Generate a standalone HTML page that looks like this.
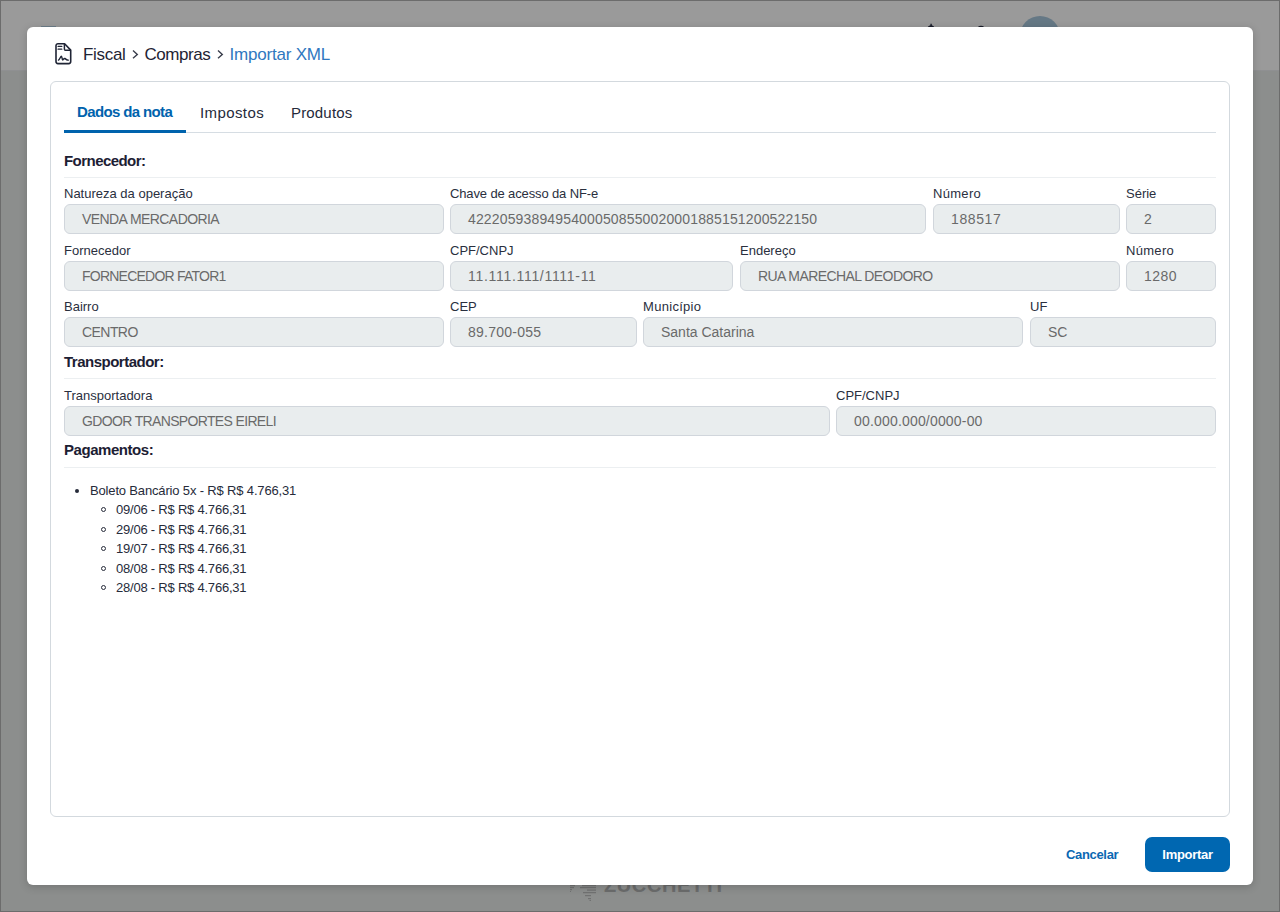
<!DOCTYPE html>
<html><head><meta charset="utf-8">
<style>
*{box-sizing:border-box;margin:0;padding:0}
html,body{width:1280px;height:912px;overflow:hidden;font-family:"Liberation Sans",sans-serif}
body{position:relative;background:#8c8e8d}
.abs{position:absolute}
#hdr{left:0;top:0;width:1280px;height:71px;background:#9a9a9a;border-bottom:1px solid #8f9092}
#frame{left:0;top:0;width:1280px;height:912px;border:1px solid #6c6c6c;pointer-events:none;z-index:50}
#modal{left:27px;top:27px;width:1226px;height:858px;background:#fff;border-radius:6px;box-shadow:0 2px 8px rgba(0,0,0,.18);z-index:10}
.crumb{top:45px;font-size:17px;color:#1f2435;white-space:nowrap;line-height:20px}
#card{left:50px;top:81px;width:1180px;height:736px;border:1px solid #d3d9de;border-radius:6px;z-index:11}
.tab{top:103px;font-size:15px;color:#252a3a;line-height:18px;white-space:nowrap}
.sec{font-size:15px;font-weight:bold;color:#1c2033;left:64px;line-height:18px;white-space:nowrap}
.sep{left:64px;width:1152px;height:1px;background:#eceff1}
.lbl{font-size:13px;color:#2a2f3e;line-height:15px;white-space:nowrap}
.inp{height:30px;background:#e9edee;border:1px solid #d1d6dc;border-radius:6px;font-size:14px;color:#6a6a6a;padding-left:17px;line-height:28px;white-space:nowrap;overflow:hidden}
.li{font-size:13px;color:#262b3a;line-height:15px;white-space:nowrap}
</style></head>
<body>
<div id="hdr" class="abs"></div>
<div class="abs" style="left:41px;top:26px;width:15px;height:1px;background:#6d7e8a"></div>
<div class="abs" style="left:1020px;top:15.6px;width:40px;height:40px;border-radius:50%;background:#657885"></div>
<svg class="abs" style="left:924px;top:22px" width="14" height="8" viewBox="0 0 14 8"><path d="M6.4 1.8h1.4v1.4c1.5.4 2.5 1.5 2.6 2.8l.8 1H2.8l.8-1c.1-1.3 1.1-2.4 2.8-2.8z" fill="#1a1d2b"/></svg>
<svg class="abs" style="left:975px;top:22px" width="12" height="8" viewBox="0 0 12 8"><path d="M3 7.5a3 3 0 0 1 6 0" fill="none" stroke="#1a1d2b" stroke-width="1.6"/></svg>
<!-- logo -->
<div class="abs" style="left:604px;top:874px;font-size:20px;line-height:23px;font-weight:bold;color:#6b6c6c;letter-spacing:0.6px;white-space:nowrap">ZUCCHETTI</div>
<svg class="abs" style="left:565px;top:880px" width="36" height="24" viewBox="0 0 36 24">
<g fill="#707171"><rect x="5" y="5" width="5" height="1.2"/><rect x="5" y="7" width="4" height="1.2"/><rect x="5" y="9" width="2" height="1.2"/><rect x="5" y="11" width="1" height="1"/>
<rect x="17" y="5" width="14" height="1.2"/><rect x="15" y="7" width="16" height="1.2"/><rect x="22" y="9.5" width="9" height="1.2"/><rect x="18" y="12" width="13" height="1.2"/><rect x="20" y="15" width="6" height="1.2"/><rect x="23" y="18" width="3" height="1.2"/><rect x="24.5" y="20" width="1.5" height="1"/></g>
</svg>

<div id="modal" class="abs"></div>
<div id="card" class="abs"></div>

<div style="position:absolute;left:0;top:0;z-index:20;width:1280px;height:912px">
<!-- breadcrumb icon -->
<svg class="abs" style="left:52px;top:40px" width="24" height="28" viewBox="0 0 24 28">
<path d="M12.6 3.7H6a2 2 0 0 0-2 2V21.6a2 2 0 0 0 2 2H16.7a2 2 0 0 0 2-2V10.1Z" fill="none" stroke="#1f2435" stroke-width="1.6" stroke-linejoin="round"/>
<path d="M12.4 3.9V9.3a1 1 0 0 0 1 1H18.6" fill="none" stroke="#1f2435" stroke-width="1.5" stroke-linejoin="round"/>
<path d="M6.1 6.4H9.8M6.1 9.2H9.8" stroke="#1f2435" stroke-width="1.3" stroke-linecap="round"/>
<path d="M6.5 20.1C7.6 19.6 8.6 16.2 9.4 16.3C10 16.4 10.2 20.2 10.8 19.9C11.5 19.3 12 18.2 12.9 18.5C13.7 18.8 14.3 19.9 15.4 20L16.3 20.1" fill="none" stroke="#1f2435" stroke-width="1.4" stroke-linejoin="round" stroke-linecap="round"/>
</svg>
<div class="abs crumb" style="left:83px;letter-spacing:-0.3px">Fiscal</div>
<svg class="abs" style="left:130px;top:48px" width="10" height="13" viewBox="0 0 10 13"><path d="M3 2.6L7.3 6.4L3 10.2" fill="none" stroke="#3a3e4c" stroke-width="1.4"/></svg>
<div class="abs crumb" style="left:144.5px;letter-spacing:-0.45px">Compras</div>
<svg class="abs" style="left:215px;top:48px" width="10" height="13" viewBox="0 0 10 13"><path d="M3 2.6L7.3 6.4L3 10.2" fill="none" stroke="#3a3e4c" stroke-width="1.4"/></svg>
<div class="abs crumb" style="left:229.5px;color:#2f78c0;letter-spacing:-0.2px">Importar XML</div>

<!-- tabs -->
<div class="abs tab" style="left:77px;color:#0063ad;font-weight:bold"><span style="letter-spacing:-0.63px">Dados da nota</span></div>
<div class="abs tab" style="left:200px;top:104px"><span style="letter-spacing:0.4px">Impostos</span></div>
<div class="abs tab" style="left:291px;top:104px"><span style="letter-spacing:0.17px">Produtos</span></div>
<div class="abs" style="left:64px;top:132px;width:1152px;height:1px;background:#d6dde3"></div>
<div class="abs" style="left:64px;top:130px;width:122px;height:3px;background:#0063ad"></div>

<!-- Fornecedor -->
<div class="abs sec" style="top:152px"><span style="letter-spacing:-0.55px">Fornecedor:</span></div>
<div class="abs sep" style="top:177px"></div>

<div class="abs lbl" style="left:64px;top:186px">Natureza da operação</div>
<div class="abs lbl" style="left:450px;top:186px"><span style="letter-spacing:-0.13px">Chave de acesso da NF-e</span></div>
<div class="abs lbl" style="left:933px;top:186px"><span style="letter-spacing:0.3px">Número</span></div>
<div class="abs lbl" style="left:1126px;top:186px">Série</div>
<div class="abs inp" style="left:64px;top:204px;width:380px"><span style="letter-spacing:-0.57px">VENDA MERCADORIA</span></div>
<div class="abs inp" style="left:450px;top:204px;width:476px"><span style="letter-spacing:0.15px">42220593894954000508550020001885151200522150</span></div>
<div class="abs inp" style="left:933px;top:204px;width:187px"><span style="letter-spacing:0.6px">188517</span></div>
<div class="abs inp" style="left:1126px;top:204px;width:90px">2</div>

<div class="abs lbl" style="left:64px;top:243px">Fornecedor</div>
<div class="abs lbl" style="left:450px;top:243px">CPF/CNPJ</div>
<div class="abs lbl" style="left:740px;top:243px">Endereço</div>
<div class="abs lbl" style="left:1126px;top:243px"><span style="letter-spacing:0.3px">Número</span></div>
<div class="abs inp" style="left:64px;top:261px;width:380px"><span style="letter-spacing:-0.77px">FORNECEDOR FATOR1</span></div>
<div class="abs inp" style="left:450px;top:261px;width:283px"><span style="letter-spacing:0.7px">11.111.111/1111-11</span></div>
<div class="abs inp" style="left:740px;top:261px;width:380px"><span style="letter-spacing:-0.58px">RUA MARECHAL DEODORO</span></div>
<div class="abs inp" style="left:1126px;top:261px;width:90px"><span style="letter-spacing:0.5px">1280</span></div>

<div class="abs lbl" style="left:64px;top:299px">Bairro</div>
<div class="abs lbl" style="left:450px;top:299px">CEP</div>
<div class="abs lbl" style="left:643px;top:299px"><span style="letter-spacing:0.3px">Município</span></div>
<div class="abs lbl" style="left:1030px;top:299px">UF</div>
<div class="abs inp" style="left:64px;top:317px;width:380px"><span style="letter-spacing:-0.56px">CENTRO</span></div>
<div class="abs inp" style="left:450px;top:317px;width:187px"><span style="letter-spacing:0.25px">89.700-055</span></div>
<div class="abs inp" style="left:643px;top:317px;width:380px">Santa Catarina</div>
<div class="abs inp" style="left:1030px;top:317px;width:186px">SC</div>

<!-- Transportador -->
<div class="abs sec" style="top:353px"><span style="letter-spacing:-0.5px">Transportador:</span></div>
<div class="abs sep" style="top:378px"></div>
<div class="abs lbl" style="left:64px;top:388px">Transportadora</div>
<div class="abs lbl" style="left:836px;top:388px">CPF/CNPJ</div>
<div class="abs inp" style="left:64px;top:406px;width:766px"><span style="letter-spacing:-0.65px">GDOOR TRANSPORTES EIRELI</span></div>
<div class="abs inp" style="left:836px;top:406px;width:380px"><span style="letter-spacing:0.18px">00.000.000/0000-00</span></div>

<!-- Pagamentos -->
<div class="abs sec" style="top:441px"><span style="letter-spacing:-0.45px">Pagamentos:</span></div>
<div class="abs sep" style="top:467px"></div>

<div class="abs" style="left:75px;top:489px;width:4px;height:4px;border-radius:50%;background:#262b3a"></div>
<div class="abs li" style="left:90px;top:483px"><span style="letter-spacing:-0.16px">Boleto Bancário 5x - R$ R$ 4.766,31</span></div>
<div class="abs" style="left:101px;top:507px;width:5px;height:5px;border-radius:50%;border:1px solid #262b3a"></div>
<div class="abs li" style="left:116px;top:502px"><span style="letter-spacing:-0.22px">09/06 - R$ R$ 4.766,31</span></div>
<div class="abs" style="left:101px;top:527px;width:5px;height:5px;border-radius:50%;border:1px solid #262b3a"></div>
<div class="abs li" style="left:116px;top:522px"><span style="letter-spacing:-0.22px">29/06 - R$ R$ 4.766,31</span></div>
<div class="abs" style="left:101px;top:546px;width:5px;height:5px;border-radius:50%;border:1px solid #262b3a"></div>
<div class="abs li" style="left:116px;top:541px"><span style="letter-spacing:-0.22px">19/07 - R$ R$ 4.766,31</span></div>
<div class="abs" style="left:101px;top:566px;width:5px;height:5px;border-radius:50%;border:1px solid #262b3a"></div>
<div class="abs li" style="left:116px;top:561px"><span style="letter-spacing:-0.22px">08/08 - R$ R$ 4.766,31</span></div>
<div class="abs" style="left:101px;top:585px;width:5px;height:5px;border-radius:50%;border:1px solid #262b3a"></div>
<div class="abs li" style="left:116px;top:580px"><span style="letter-spacing:-0.22px">28/08 - R$ R$ 4.766,31</span></div>

<!-- buttons -->
<div class="abs" style="left:1066px;top:847px;font-size:13px;font-weight:bold;color:#0a68b3;line-height:15px"><span style="letter-spacing:-0.33px">Cancelar</span></div>
<div class="abs" style="left:1145px;top:837px;width:85px;height:35px;border-radius:7px;background:#0067b1;color:#fff;font-size:13px;font-weight:bold;line-height:35px;text-align:center;letter-spacing:-0.3px">Importar</div>
</div>
<div id="frame" class="abs"></div>
</body></html>
